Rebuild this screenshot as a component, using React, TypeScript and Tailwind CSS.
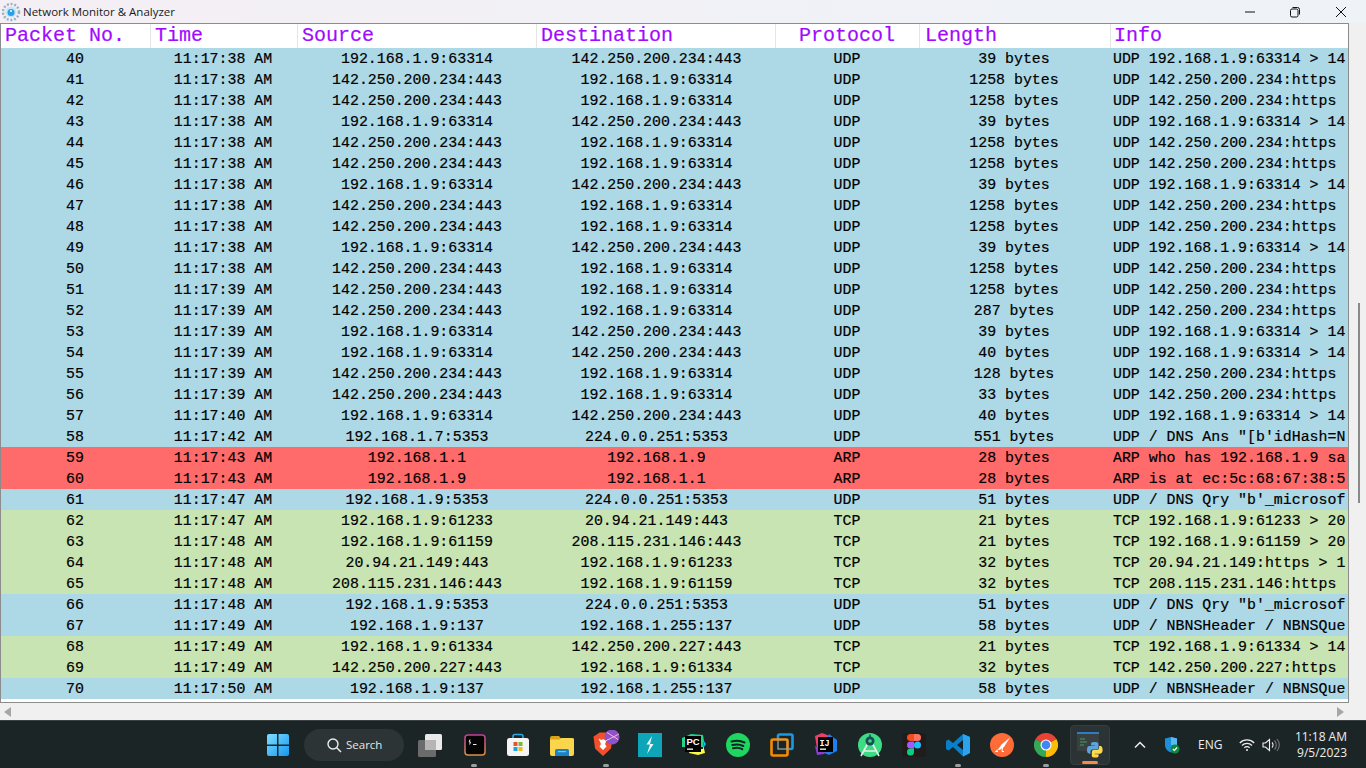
import { ReactNode } from "react"

type Row = [number, string, string, string, string, string, string]

const OUT = "192.168.1.9:63314"
const GOOG = "142.250.200.234:443"
const outInfo = "UDP 192.168.1.9:63314 > 14"
const inInfo = "UDP 142.250.200.234:https"

const rows: Row[] = [
  [40, "38", OUT, GOOG, "UDP", "39 bytes", outInfo],
  [41, "38", GOOG, OUT, "UDP", "1258 bytes", inInfo],
  [42, "38", GOOG, OUT, "UDP", "1258 bytes", inInfo],
  [43, "38", OUT, GOOG, "UDP", "39 bytes", outInfo],
  [44, "38", GOOG, OUT, "UDP", "1258 bytes", inInfo],
  [45, "38", GOOG, OUT, "UDP", "1258 bytes", inInfo],
  [46, "38", OUT, GOOG, "UDP", "39 bytes", outInfo],
  [47, "38", GOOG, OUT, "UDP", "1258 bytes", inInfo],
  [48, "38", GOOG, OUT, "UDP", "1258 bytes", inInfo],
  [49, "38", OUT, GOOG, "UDP", "39 bytes", outInfo],
  [50, "38", GOOG, OUT, "UDP", "1258 bytes", inInfo],
  [51, "39", GOOG, OUT, "UDP", "1258 bytes", inInfo],
  [52, "39", GOOG, OUT, "UDP", "287 bytes", inInfo],
  [53, "39", OUT, GOOG, "UDP", "39 bytes", outInfo],
  [54, "39", OUT, GOOG, "UDP", "40 bytes", outInfo],
  [55, "39", GOOG, OUT, "UDP", "128 bytes", inInfo],
  [56, "39", GOOG, OUT, "UDP", "33 bytes", inInfo],
  [57, "40", OUT, GOOG, "UDP", "40 bytes", outInfo],
  [58, "42", "192.168.1.7:5353", "224.0.0.251:5353", "UDP", "551 bytes", "UDP / DNS Ans \"[b'idHash=N"],
  [59, "43", "192.168.1.1", "192.168.1.9", "ARP", "28 bytes", "ARP who has 192.168.1.9 sa"],
  [60, "43", "192.168.1.9", "192.168.1.1", "ARP", "28 bytes", "ARP is at ec:5c:68:67:38:5"],
  [61, "47", "192.168.1.9:5353", "224.0.0.251:5353", "UDP", "51 bytes", "UDP / DNS Qry \"b'_microsof"],
  [62, "47", "192.168.1.9:61233", "20.94.21.149:443", "TCP", "21 bytes", "TCP 192.168.1.9:61233 > 20"],
  [63, "48", "192.168.1.9:61159", "208.115.231.146:443", "TCP", "21 bytes", "TCP 192.168.1.9:61159 > 20"],
  [64, "48", "20.94.21.149:443", "192.168.1.9:61233", "TCP", "32 bytes", "TCP 20.94.21.149:https > 1"],
  [65, "48", "208.115.231.146:443", "192.168.1.9:61159", "TCP", "32 bytes", "TCP 208.115.231.146:https"],
  [66, "48", "192.168.1.9:5353", "224.0.0.251:5353", "UDP", "51 bytes", "UDP / DNS Qry \"b'_microsof"],
  [67, "49", "192.168.1.9:137", "192.168.1.255:137", "UDP", "58 bytes", "UDP / NBNSHeader / NBNSQue"],
  [68, "49", "192.168.1.9:61334", "142.250.200.227:443", "TCP", "21 bytes", "TCP 192.168.1.9:61334 > 14"],
  [69, "49", "142.250.200.227:443", "192.168.1.9:61334", "TCP", "32 bytes", "TCP 142.250.200.227:https"],
  [70, "50", "192.168.1.9:137", "192.168.1.255:137", "UDP", "58 bytes", "UDP / NBNSHeader / NBNSQue"],
]

function rowColor(proto: string) {
  if (proto === "ARP") return "bg-[#ff6b6b]"
  if (proto === "TCP") return "bg-[#c8e4b2]"
  return "bg-[#add8e6]"
}

function HeadCell(props: { w: string; children: ReactNode; extra?: string }) {
  return (
    <div className={`${props.w} shrink-0 h-full border-r border-[#e5e5e5] ${props.extra ?? "pl-1"}`}>
      {props.children}
    </div>
  )
}

function Table() {
  return (
    <div className="flex-1 min-w-0 flex flex-col bg-white border border-[#8c8c8c] overflow-hidden font-['Liberation_Mono',monospace]">
      <div className="h-6 shrink-0 flex text-[20px] leading-6 text-[#a00bff] [-webkit-text-stroke:0.2px]">
        <HeadCell w="w-[150px]">Packet No.</HeadCell>
        <HeadCell w="w-[147px]">Time</HeadCell>
        <HeadCell w="w-[239px]">Source</HeadCell>
        <HeadCell w="w-[239px]">Destination</HeadCell>
        <HeadCell w="w-[144px]" extra="text-center pr-px">Protocol</HeadCell>
        <HeadCell w="w-[191px]" extra="pl-[5px]">Length</HeadCell>
        <div className="flex-1 pl-[3px]">Info</div>
      </div>
      {rows.map((r) => (
        <div key={r[0]} className={`h-[21px] shrink-0 flex pt-px text-[14.9px] leading-[21px] text-black [-webkit-text-stroke:0.2px] ${rowColor(r[4])}`}>
          <div className="w-[150px] shrink-0 text-center pr-[2px]">{r[0]}</div>
          <div className="w-[147px] shrink-0 text-center pr-[3px]">{`11:17:${r[1]} AM`}</div>
          <div className="w-[239px] shrink-0 text-center pr-px">{r[2]}</div>
          <div className="w-[239px] shrink-0 text-center">{r[3]}</div>
          <div className="w-[144px] shrink-0 text-center pr-[2px]">{r[4]}</div>
          <div className="w-[191px] shrink-0 text-center pr-[3px]">{r[5]}</div>
          <div className="flex-1 min-w-0 ml-[2px] overflow-hidden whitespace-nowrap">{r[6]}</div>
        </div>
      ))}
    </div>
  )
}

function AppLogo() {
  return (
    <svg width="20" height="20" viewBox="0 0 20 20" className="-ml-[1px]">
      <circle cx="10" cy="10" r="8" fill="none" stroke="#9db0c0" strokeWidth="2.500" strokeDasharray="2 1.700" />
      <circle cx="10" cy="10" r="5.500" fill="#c5e6f8" />
      <circle cx="10" cy="10.500" r="3.500" fill="#2b9fe6" />
      <circle cx="10" cy="9" r="1.100" fill="#e8f6ff" />
    </svg>
  )
}

function WindowButtons() {
  return (
    <div className="flex items-center ml-auto">
      <svg width="12" height="12" viewBox="0 0 12 12" className="mr-[33px]">
        <path d="M1 6h10" stroke="#111" strokeWidth="1" />
      </svg>
      <svg width="12" height="12" viewBox="0 0 12 12" className="mr-[34px]">
        <rect x="1.500" y="3" width="7.500" height="8" rx="1.500" fill="none" stroke="#111" />
        <path d="M3.500 1.500h5a2 2 0 0 1 2 2v5" fill="none" stroke="#111" />
      </svg>
      <svg width="12" height="12" viewBox="0 0 12 12" className="mr-[19px]">
        <path d="M1 1l10 10M11 1L1 11" stroke="#111" strokeWidth="1" />
      </svg>
    </div>
  )
}

const I = (props: { children: ReactNode; dot?: boolean }) => (
  <div className="relative w-6 h-6 shrink-0 flex items-center justify-center">
    {props.children}
    {props.dot && <span className="absolute left-[9px] top-[31px] w-[6px] h-[3px] rounded-full bg-[#9aa0a0]" />}
  </div>
)

function TaskIcons() {
  return (
    <div className="flex items-center gap-5">
      <I>
        <svg width="24" height="24" viewBox="0 0 24 24">
          <defs>
            <linearGradient id="win" x1="0" y1="0" x2="1" y2="1">
              <stop offset="0" stopColor="#7fe0ff" />
              <stop offset="1" stopColor="#1497f0" />
            </linearGradient>
          </defs>
          <path d="M1 3a2 2 0 0 1 2-2h8v10.500H1zM12.500 1H21a2 2 0 0 1 2 2v8.500H12.500zM1 13h10v10H3a2 2 0 0 1-2-2zM12.500 13H23v8a2 2 0 0 1-2 2h-8.500z" fill="url(#win)" />
        </svg>
      </I>
      <div className="w-[100px] h-8 ml-[-6px] mr-[-6px] rounded-full bg-[#2c3435] flex items-center pl-[22px] gap-[4px] text-[11.5px] text-[#e6e6e6] font-['Open_Sans',sans-serif]">
        <svg width="16" height="16" viewBox="0 0 16 16" fill="none" stroke="#eee" strokeWidth="1.400">
          <circle cx="7" cy="7" r="5" />
          <path d="M10.500 10.500L15 15" />
        </svg>
        Search
      </div>
      <I>
        <svg width="24" height="24" viewBox="0 0 24 24">
          <rect x="7" y="1" width="17" height="16" rx="1.500" fill="#e9e9e9" />
          <rect x="0" y="7" width="18" height="17" rx="1.500" fill="#6b6b6b" />
          <rect x="7" y="7" width="11" height="10" fill="#b5b5b5" />
        </svg>
      </I>
      <I dot>
        <svg width="22" height="22" viewBox="0 0 22 22" className="ml-[2px]">
          <defs>
            <linearGradient id="term" x1="0" y1="0" x2="0" y2="1">
              <stop offset="0" stopColor="#c43e95" />
              <stop offset="1" stopColor="#d9904a" />
            </linearGradient>
          </defs>
          <rect x="1" y="1" width="20" height="20" rx="3" fill="#050505" stroke="url(#term)" strokeWidth="1.500" />
          <path d="M6 5.500l-.8 2.500h1.300l-.9 2.500M9 10.500h3.500" stroke="#eee" strokeWidth="1" fill="none" />
        </svg>
      </I>
      <I>
        <svg width="24" height="24" viewBox="0 0 24 24">
          <path d="M7 6V3.500A2 2 0 0 1 9 1.500h6a2 2 0 0 1 2 2V6" fill="none" stroke="#29a8e6" strokeWidth="1.600" />
          <rect x="1" y="5" width="22" height="18" rx="2.500" fill="#f4f4f4" />
          <rect x="7.500" y="9" width="4" height="4" fill="#e8532b" />
          <rect x="12.500" y="9" width="4" height="4" fill="#7ab92b" />
          <rect x="7.500" y="14" width="4" height="4" fill="#1ba1e6" />
          <rect x="12.500" y="14" width="4" height="4" fill="#f6b90e" />
        </svg>
      </I>
      <I>
        <svg width="24" height="24" viewBox="0 0 24 24">
          <path d="M0 5a2 2 0 0 1 2-2h7l2 2.500h13V8H0z" fill="#d9a416" />
          <path d="M0 6.500h9.500l2-1.500H22a2 2 0 0 1 2 2v14a2 2 0 0 1-2 2H2a2 2 0 0 1-2-2z" fill="#fbd54c" />
          <path d="M5 23v-5.500a1.500 1.500 0 0 1 1.500-1.500h11a1.500 1.500 0 0 1 1.500 1.500V23z" fill="#1a83c6" />
          <rect x="8" y="18" width="8" height="1.200" fill="#7cc2ec" />
        </svg>
      </I>
      <I dot>
        <svg width="28" height="28" viewBox="0 0 28 28" className="shrink-0 ml-[2px] -mt-[1px]">
          <path d="M3 5l3.500-2.500H14L17.500 5l2 1.500-1.500 12-8 7.500-8-7.500L.5 6.500z" fill="#f1502a" />
          <path d="M5.500 8.500l3 1.500 1.500-1 1.500 1 3-1.500-2.500 5.500 1.500 2.500-3.500 3.500-3.500-3.500 1.500-2.500z" fill="#fff" />
          <circle cx="19" cy="7" r="7.500" fill="#8f52c8" />
          <path d="M12.500 11L26 4M14 2.500l11 7" stroke="#f5bcd9" strokeWidth="1" />
        </svg>
      </I>
      <I>
        <svg width="24" height="24" viewBox="0 0 24 24">
          <rect width="24" height="24" fill="#0ea5b8" />
          <path d="M14 3l-5.500 8.500h3.500L9 21l6.500-10H12z" fill="#eefbfc" />
        </svg>
      </I>
      <I>
        <svg width="24" height="24" viewBox="0 0 24 24">
          <path d="M0 5l9-4 12 1 1 6-1 6H0z" fill="#21d789" />
          <path d="M22 8l2 3-2 3z" fill="#07c3f2" />
          <path d="M21 11l2 9-7 2-9-2 1-4h13z" fill="#fcf84a" />
          <rect x="3" y="3" width="16" height="16" fill="#000" />
          <text x="4.500" y="12" fontSize="9.500" fontWeight="700" fill="#fff" fontFamily="Liberation Sans">PC</text>
          <rect x="5" y="15.500" width="6" height="1.300" fill="#fff" />
        </svg>
      </I>
      <I>
        <svg width="24" height="24" viewBox="0 0 24 24">
          <circle cx="12" cy="12" r="12" fill="#1ed760" />
          <path d="M5.500 8.500c4.500-1.300 9-1 13 1M6.300 12c3.800-1 7.600-.8 11 1M7 15.300c3.200-.8 6.500-.6 9.300.9" fill="none" stroke="#122" strokeWidth="2" strokeLinecap="round" />
        </svg>
      </I>
      <I>
        <svg width="24" height="24" viewBox="0 0 24 24" fill="none">
          <path d="M8 6.500V3a1.500 1.500 0 0 1 1.500-1.500H21A1.500 1.500 0 0 1 22.500 3v11.500A1.500 1.500 0 0 1 21 16h-3.500" stroke="#1a9be0" strokeWidth="2.600" />
          <rect x="1.500" y="6.500" width="16" height="16" rx="1.500" stroke="#f58a07" strokeWidth="2.600" />
          <rect x="8" y="6.500" width="9.500" height="9.500" stroke="#9aa5a8" strokeWidth="1.300" />
        </svg>
      </I>
      <I>
        <svg width="24" height="24" viewBox="0 0 24 24">
          <path d="M1 3l7-3 8 3-4 9-9 4z" fill="#ec3f6e" />
          <path d="M15 1l8 6v11l-8 4-7-3z" fill="#1f7ef0" />
          <path d="M1 13l2 9 7-1 3-3z" fill="#8a3fd4" />
          <rect x="4" y="4" width="15" height="15" fill="#000" />
          <text x="5.500" y="12.500" fontSize="8.500" fontWeight="700" fill="#fff" fontFamily="Liberation Mono">IJ</text>
          <rect x="6" y="15.500" width="6" height="1.300" fill="#fff" />
        </svg>
      </I>
      <I>
        <svg width="24" height="24" viewBox="0 0 24 24">
          <circle cx="12" cy="12" r="12" fill="#3ddc84" />
          <path d="M3 23l7.500-14M21 23l-7.500-14M6.500 18h11" stroke="#e4efe9" strokeWidth="1.600" fill="none" />
          <circle cx="12" cy="8" r="4.500" fill="#1d4b57" />
          <circle cx="12" cy="8" r="1.800" fill="#3ddc84" />
          <path d="M12 1.500v2.500" stroke="#1d4b57" strokeWidth="1.500" />
        </svg>
      </I>
      <I>
        <svg width="24" height="24" viewBox="0 0 24 24">
          <rect width="24" height="24" rx="2" fill="#201c1c" />
          <path d="M12 1H8.500a3.500 3.500 0 0 0 0 7H12z" fill="#f24e1e" />
          <path d="M12 1h3.500a3.500 3.500 0 0 1 0 7H12z" fill="#ff7262" />
          <path d="M12 8.500H8.500a3.500 3.500 0 0 0 0 7H12z" fill="#a259ff" />
          <circle cx="15.500" cy="12" r="3.500" fill="#1abcfe" />
          <path d="M12 15.500H8.500a3.500 3.500 0 1 0 3.500 3.500z" fill="#0acf83" />
        </svg>
      </I>
      <I dot>
        <svg width="24" height="24" viewBox="0 0 24 24">
          <path d="M17 1l7 3v16l-7 3.500L7 14l-4.500 3.500L0 16v-8l2.500-1.500L7 10z" fill="#0a7fc9" />
          <path d="M17 1l7 3v16l-7 3.500z" fill="#2aa4ee" />
          <path d="M17 7l-6 5 6 5z" fill="#1c1f20" />
        </svg>
      </I>
      <I>
        <svg width="24" height="24" viewBox="0 0 24 24">
          <circle cx="12" cy="12" r="12" fill="#ff6c37" />
          <path d="M20 4.500l-8.500 7-3 4.500 1 1 4.500-3z" fill="#fff" />
          <path d="M12.500 14l-.5 4.500h2M9 16l-3.500 2.500H8" fill="none" stroke="#fff" strokeWidth="1" />
        </svg>
      </I>
      <I dot>
        <svg width="24" height="24" viewBox="0 0 24 24">
          <path d="M12 12L1.600 6A12 12 0 0 1 22.400 6z" fill="#ea4335" />
          <path d="M12 12L22.400 6A12 12 0 0 1 12 24z" fill="#fbbc05" />
          <path d="M12 12L12 24A12 12 0 0 1 1.600 6z" fill="#34a853" />
          <circle cx="12" cy="12" r="5.500" fill="#fff" />
          <circle cx="12" cy="12" r="4.400" fill="#4285f4" />
        </svg>
      </I>
      <div className="relative w-10 h-10 -mx-2 shrink-0 rounded-[4px] bg-[#2b3334] border border-[#363e3f] flex items-center justify-center">
        <svg width="26" height="26" viewBox="0 0 26 26">
          <rect x="0" y="0" width="22" height="19" fill="#3a3f42" />
          <rect x="0" y="0" width="22" height="2" fill="#2a7fc4" />
          <path d="M3 7h5M3 10h7M3 13h4" stroke="#3da35a" strokeWidth="1.200" />
          <g transform="translate(10 10) scale(0.65)">
            <path d="M11.900 0C5.800 0 6.200 2.600 6.200 2.600v2.700H12v.8H3.900S0 5.700 0 11.900s3.400 6 3.400 6h2V15s-.1-3.400 3.300-3.400h5.700s3.200.1 3.200-3.100V3.200S18.100 0 11.900 0z" fill="#5aa5dc" />
            <path d="M12.100 24c6.100 0 5.700-2.600 5.700-2.600v-2.700H12v-.8h8.100s3.900.4 3.900-5.800-3.400-6-3.400-6h-2V9s.1 3.400-3.300 3.400H10.600s-3.200-.1-3.200 3.100v5.300S6.900 24 12.100 24z" fill="#ffd94c" />
          </g>
        </svg>
        <span className="absolute left-[11px] top-[35px] w-4 h-[3px] rounded-full bg-[#f58a4b]" />
      </div>
    </div>
  )
}

function Tray() {
  return (
    <div className="absolute right-0 top-0 h-full flex items-center text-[#eee] font-['Open_Sans',sans-serif]">
      <svg width="12" height="12" viewBox="0 0 12 12" fill="none" stroke="#eee" strokeWidth="1.500" className="mr-[18px]">
        <path d="M1 8.500l5-5 5 5" />
      </svg>
      <svg width="16" height="18" viewBox="0 0 16 18" className="mr-[18px]">
        <path d="M1 2.500L7 1l6 1.500V9c0 4-3 6.500-6 7.500C4 15.500 1 13 1 9z" fill="#1b8fdc" />
        <path d="M7 1l6 1.500V9H7z" fill="#59b9f2" />
        <circle cx="11" cy="13" r="4.500" fill="#10893e" />
        <path d="M8.800 13l1.500 1.500 2.800-3" fill="none" stroke="#fff" strokeWidth="1.100" />
      </svg>
      <span className="text-[12px] w-6 text-center mr-[17px]">ENG</span>
      <svg width="16" height="14" viewBox="0 0 16 14" fill="none" stroke="#eee" strokeWidth="1.200" className="mr-[7px]">
        <path d="M.8 5a10 10 0 0 1 14.400 0M3 7.500a7 7 0 0 1 10 0M5.300 9.800a3.800 3.800 0 0 1 5.400 0" />
        <circle cx="8" cy="12" r="1" fill="#eee" stroke="none" />
      </svg>
      <svg width="18" height="14" viewBox="0 0 18 14" fill="none" stroke="#eee" strokeWidth="1.100" className="mr-[11px]">
        <path d="M1 5h2.500L7.500 1.500v11L3.500 9H1z" />
        <path d="M10 4.500a3.500 3.500 0 0 1 0 5" />
        <path d="M12.500 2.500a6.500 6.500 0 0 1 0 9M15 1a9 9 0 0 1 0 12" stroke="#777" />
      </svg>
      <div className="w-[56px] text-right text-[12px] leading-4 mr-[19px] whitespace-nowrap">
        <div>11:18 AM</div>
        <div>9/5/2023</div>
      </div>
    </div>
  )
}

export default function App() {
  return (
    <div className="w-[1366px] h-[768px] overflow-hidden flex flex-col bg-[#f0f0f0]">
      <div className="h-[23px] shrink-0 flex items-center pl-[2px] bg-gradient-to-r from-[#f4eff4] to-[#eef3f8] text-[11.5px] text-[#1a1a1a] font-['Open_Sans',sans-serif]">
        <AppLogo />
        <span className="ml-[2px]">Network Monitor &amp; Analyzer</span>
        <WindowButtons />
      </div>
      <div className="h-[680px] shrink-0 flex">
        <Table />
        <div className="w-[17px] shrink-0 bg-[#f0f0f0] relative">
          <span className="absolute left-[9px] top-[280px] w-[2px] h-[200px] bg-[#8a8a8a]" />
        </div>
      </div>
      <div className="h-[17px] shrink-0 flex items-center justify-between pl-1 pr-[22px] bg-[#f0f0f0]">
        <span className="w-0 h-0 border-y-[5px] border-y-transparent border-r-[7px] border-r-[#a6a6a6]" />
        <span className="w-0 h-0 border-y-[5px] border-y-transparent border-l-[7px] border-l-[#a6a6a6]" />
      </div>
      <div className="relative h-12 shrink-0 bg-[#1c2526] border-t border-[#3a4142] flex items-center pl-[266px]">
        <TaskIcons />
        <Tray />
      </div>
    </div>
  )
}
